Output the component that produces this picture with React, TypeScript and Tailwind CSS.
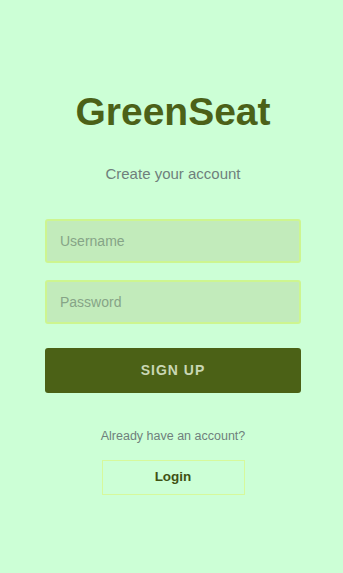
import React from 'react';

export default function App() {
  return (
    <div className="min-h-[573px] w-full bg-[#ccffd6] flex flex-col items-center pt-[92px] pl-[3px] font-['Liberation_Sans',Arial,sans-serif]">
      <h1 className="text-[39px] leading-none font-bold text-[#4b6118]">GreenSeat</h1>
      <p className="mt-[35px] text-[15px] leading-none text-[#6f7f7c]">Create your account</p>

      <form className="mt-[38px] w-[256px] flex flex-col" onSubmit={(e) => e.preventDefault()}>
        <input
          type="text"
          placeholder="Username"
          className="h-[44px] w-full rounded-[3px] border-2 border-[#cdf590] bg-[#c2ebbb] px-[13px] text-[14px] text-[#3f5213] placeholder:text-[#86a487] outline-none"
        />
        <input
          type="password"
          placeholder="Password"
          className="mt-[17px] h-[44px] w-full rounded-[3px] border-2 border-[#cdf590] bg-[#c2ebbb] px-[13px] text-[14px] text-[#3f5213] placeholder:text-[#86a487] outline-none"
        />
        <button
          type="submit"
          className="mt-[24px] h-[45px] w-full rounded-[3px] bg-[#4b6116] text-[14px] font-bold tracking-[1px] text-[#c9d7b4]"
        >
          SIGN UP
        </button>
      </form>

      <p className="mt-[37px] text-[12.5px] leading-none text-[#6f7f7c]">Already have an account?</p>
      <button className="mt-[17px] h-[35px] w-[143px] border border-[#d6f99c] text-[13.5px] font-bold text-[#3f5213]">
        Login
      </button>
    </div>
  );
}
